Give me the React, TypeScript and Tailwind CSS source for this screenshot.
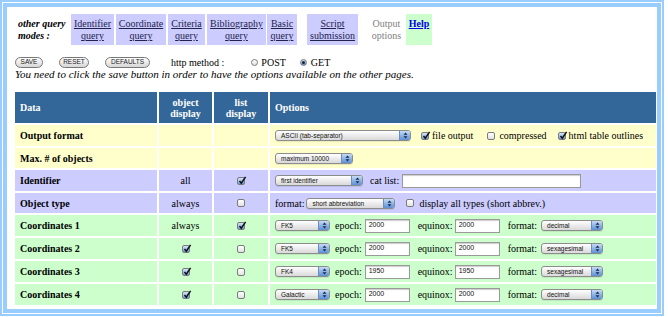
const serif = "font-['Liberation_Serif','Times_New_Roman',serif]";
const sans = "font-['Liberation_Sans',Arial,sans-serif]";

function Arrows() {
  return (
    <svg width="5" height="7" viewBox="0 0 5 7">
      <path d="M2.5 0.5 L4.5 2.8 L0.5 2.8 Z" fill="#1a2a44" />
      <path d="M2.5 6.5 L4.5 4.2 L0.5 4.2 Z" fill="#1a2a44" />
    </svg>
  );
}

function Select({ w, label, className = "" }: { w: string; label: string; className?: string }) {
  return (
    <div className={`${w} h-[11px] flex shrink-0 rounded-[3px] border border-[#8c8c8c] bg-gradient-to-b from-white to-[#d9d9d9] overflow-hidden shadow-[0_1px_0_rgba(0,0,0,0.08)] ${className}`}>
      <span className={`flex-1 pl-[5px] text-[6.5px] leading-[9px] text-[#111] whitespace-nowrap overflow-hidden ${sans}`}>
        {label}
      </span>
      <span className="w-[11px] flex items-center justify-center border-l border-[#6c8cc0] bg-gradient-to-b from-[#c4dbf6] to-[#5b8fd6]">
        <Arrows />
      </span>
    </div>
  );
}

function Check({ on, className = "" }: { on?: boolean; className?: string }) {
  return (
    <span
      className={`relative inline-block shrink-0 w-[8px] h-[8px] rounded-[2px] border border-[#7b7b7b] ${
        on ? "bg-gradient-to-b from-[#d6e6f8] to-[#6c9bd9]" : "bg-gradient-to-b from-white to-[#e2e2e2]"
      } ${className}`}
    >
      {on && (
        <svg className="absolute left-[0px] top-[-2px]" width="9" height="9" viewBox="0 0 9 9">
          <path d="M1.5 5 L3.3 7.2 L7.6 0.8" fill="none" stroke="#111" strokeWidth="1.5" />
        </svg>
      )}
    </span>
  );
}

function Radio({ on, className = "" }: { on?: boolean; className?: string }) {
  return (
    <span
      className={`inline-flex items-center justify-center shrink-0 w-[7px] h-[7px] rounded-full border border-[#7b7b7b] ${
        on ? "bg-gradient-to-b from-[#cfe1f7] to-[#5f92d6]" : "bg-gradient-to-b from-white to-[#e2e2e2]"
      } ${className}`}
    >
      {on && <span className="w-[3px] h-[3px] rounded-full bg-[#1a2333]" />}
    </span>
  );
}

function Btn({ w, label, className = "" }: { w: string; label: string; className?: string }) {
  return (
    <span
      className={`${w} h-[11px] inline-flex items-center justify-center rounded-full border border-[#777] bg-gradient-to-b from-white to-[#d6d6d6] text-[6.5px] leading-none text-[#222] ${sans} ${className}`}
    >
      {label}
    </span>
  );
}

function Field({ w, value, className = "" }: { w: string; value?: string; className?: string }) {
  return (
    <span
      className={`${w} h-[14px] inline-flex items-center shrink-0 pl-[3px] bg-white border border-[#9a9a9a] shadow-[inset_0_1px_1px_rgba(0,0,0,0.2)] text-[7px] text-[#111] ${sans} ${className}`}
    >
      {value}
    </span>
  );
}

const tabs = [
  { t: ["Identifier", "query"], c: "w-[43px] ml-0 bg-[#ccccff]" },
  { t: ["Coordinate", "query"], c: "w-[50px] ml-[2px] bg-[#ccccff]" },
  { t: ["Criteria", "query"], c: "w-[37px] ml-[2px] bg-[#ccccff]" },
  { t: ["Bibliography", "query"], c: "w-[59px] ml-[2px] bg-[#ccccff]" },
  { t: ["Basic", "query"], c: "w-[30px] ml-[1px] bg-[#ccccff]" },
  { t: ["Script", "submission"], c: "w-[51px] ml-[10px] bg-[#ccccff]" },
];

function Coords({ sys, ep, fmt }: { sys: string; ep: string; fmt: string }) {
  return (
    <div className="flex items-center pl-[5px]">
      <Select w="w-[55px]" label={sys} />
      <span className="ml-[5px]">epoch:</span>
      <Field w="w-[45px]" value={ep} className="ml-[3px]" />
      <span className="ml-[8px]">equinox:</span>
      <Field w="w-[45px]" value={ep} className="ml-[2px]" />
      <span className="ml-[8px]">format:</span>
      <Select w="w-[62px]" label={fmt} className="ml-[4px]" />
    </div>
  );
}

export default function App() {
  const label = "flex items-center pl-[5px] font-bold";
  const mid = "flex items-center justify-center";
  const opt = "flex items-center pl-[5px]";

  return (
    <div className={`w-[664px] h-[316px] border-2 border-[#99ccff] p-px bg-white text-[10px] text-black ${serif}`}>
      <div className="h-full border-4 border-[#99ccff] overflow-hidden">
        <div className="pl-2 pt-[7px]">
          {/* query mode tabs */}
          <div className="flex items-start h-[31px] leading-[12px]">
            <div className="w-[56px] pl-[3px] pt-[4px] font-bold italic">
              other query
              <br />
              modes :
            </div>
            {tabs.map((tab) => (
              <div key={tab.t[0]} className={`h-[31px] pt-[4px] text-center text-[#22224a] underline ${tab.c}`}>
                {tab.t[0]}
                <br />
                {tab.t[1]}
              </div>
            ))}
            <div className="w-[35px] ml-[11px] h-[31px] pt-[4px] text-center text-[#808080]">
              Output
              <br />
              options
            </div>
            <div className="w-[26px] ml-[2px] h-[31px] pt-[4px] text-center bg-[#ccffcc] text-[#0000ee] font-bold underline">
              Help
            </div>
          </div>

          {/* buttons */}
          <div className="mt-[11px] h-[12px] flex items-center">
            <Btn w="w-[28px]" label="SAVE" />
            <Btn w="w-[30px]" label="RESET" className="ml-[16px]" />
            <Btn w="w-[45px]" label="DEFAULTS" className="ml-[16px]" />
            <span className="ml-[21px]">http method :</span>
            <Radio className="ml-[27px]" />
            <span className="ml-[3px]">POST</span>
            <Radio on className="ml-[14px]" />
            <span className="ml-[4px]">GET</span>
          </div>
          <div className="h-[12px] leading-[12px] italic text-[11px]">
            You need to click the save button in order to have the options available on the other pages.
          </div>

          {/* options table */}
          <div className="mt-[12px] w-[641px] grid grid-cols-[142px_53px_54px_386px] grid-rows-[31px_21px_20px_21px_20px_21px_21px_21px_21px] gap-[2px] bg-white">
            <div className={`${label} bg-[#336699] text-white`}>Data</div>
            <div className={`${mid} bg-[#336699] text-white font-bold text-center leading-[11px]`}>
              object
              <br />
              display
            </div>
            <div className={`${mid} bg-[#336699] text-white font-bold text-center leading-[11px]`}>
              list
              <br />
              display
            </div>
            <div className={`${label} bg-[#336699] text-white`}>Options</div>

            <div className={`${label} bg-[#ffffcc]`}>Output format</div>
            <div className="bg-[#ffffcc]" />
            <div className="bg-[#ffffcc]" />
            <div className={`${opt} bg-[#ffffcc]`}>
              <Select w="w-[136px]" label="ASCII (tab-separator)" />
              <Check on className="ml-[10px]" />
              <span className="ml-[3px]">file output</span>
              <Check className="ml-[14px]" />
              <span className="ml-[4px]">compressed</span>
              <Check on className="ml-[11px]" />
              <span className="ml-[3px]">html table outlines</span>
            </div>

            <div className={`${label} bg-[#ffffcc]`}>Max. # of objects</div>
            <div className="bg-[#ffffcc]" />
            <div className="bg-[#ffffcc]" />
            <div className={`${opt} bg-[#ffffcc]`}>
              <Select w="w-[78px]" label="maximum 10000" />
            </div>

            <div className={`${label} bg-[#ccccff]`}>Identifier</div>
            <div className={`${mid} bg-[#ccccff]`}>all</div>
            <div className={`${mid} bg-[#ccccff]`}>
              <Check on />
            </div>
            <div className={`${opt} bg-[#ccccff]`}>
              <Select w="w-[88px]" label="first identifier" />
              <span className="ml-[7px]">cat list:</span>
              <Field w="w-[179px]" className="ml-[3px]" />
            </div>

            <div className={`${label} bg-[#ccccff]`}>Object type</div>
            <div className={`${mid} bg-[#ccccff]`}>always</div>
            <div className={`${mid} bg-[#ccccff]`}>
              <Check />
            </div>
            <div className={`${opt} bg-[#ccccff]`}>
              <span>format:</span>
              <Select w="w-[89px]" label="short abbreviation" className="ml-[2px]" />
              <Check className="ml-[11px]" />
              <span className="ml-[5px]">display all types (short abbrev.)</span>
            </div>

            <div className={`${label} bg-[#ccffcc]`}>Coordinates 1</div>
            <div className={`${mid} bg-[#ccffcc]`}>always</div>
            <div className={`${mid} bg-[#ccffcc]`}>
              <Check on />
            </div>
            <div className="bg-[#ccffcc] flex items-center">
              <Coords sys="FK5" ep="2000" fmt="decimal" />
            </div>

            <div className={`${label} bg-[#ccffcc]`}>Coordinates 2</div>
            <div className={`${mid} bg-[#ccffcc]`}>
              <Check on />
            </div>
            <div className={`${mid} bg-[#ccffcc]`}>
              <Check />
            </div>
            <div className="bg-[#ccffcc] flex items-center">
              <Coords sys="FK5" ep="2000" fmt="sexagesimal" />
            </div>

            <div className={`${label} bg-[#ccffcc]`}>Coordinates 3</div>
            <div className={`${mid} bg-[#ccffcc]`}>
              <Check on />
            </div>
            <div className={`${mid} bg-[#ccffcc]`}>
              <Check />
            </div>
            <div className="bg-[#ccffcc] flex items-center">
              <Coords sys="FK4" ep="1950" fmt="sexagesimal" />
            </div>

            <div className={`${label} bg-[#ccffcc]`}>Coordinates 4</div>
            <div className={`${mid} bg-[#ccffcc]`}>
              <Check on />
            </div>
            <div className={`${mid} bg-[#ccffcc]`}>
              <Check />
            </div>
            <div className="bg-[#ccffcc] flex items-center">
              <Coords sys="Galactic" ep="2000" fmt="decimal" />
            </div>
          </div>
        </div>
      </div>
    </div>
  );
}
